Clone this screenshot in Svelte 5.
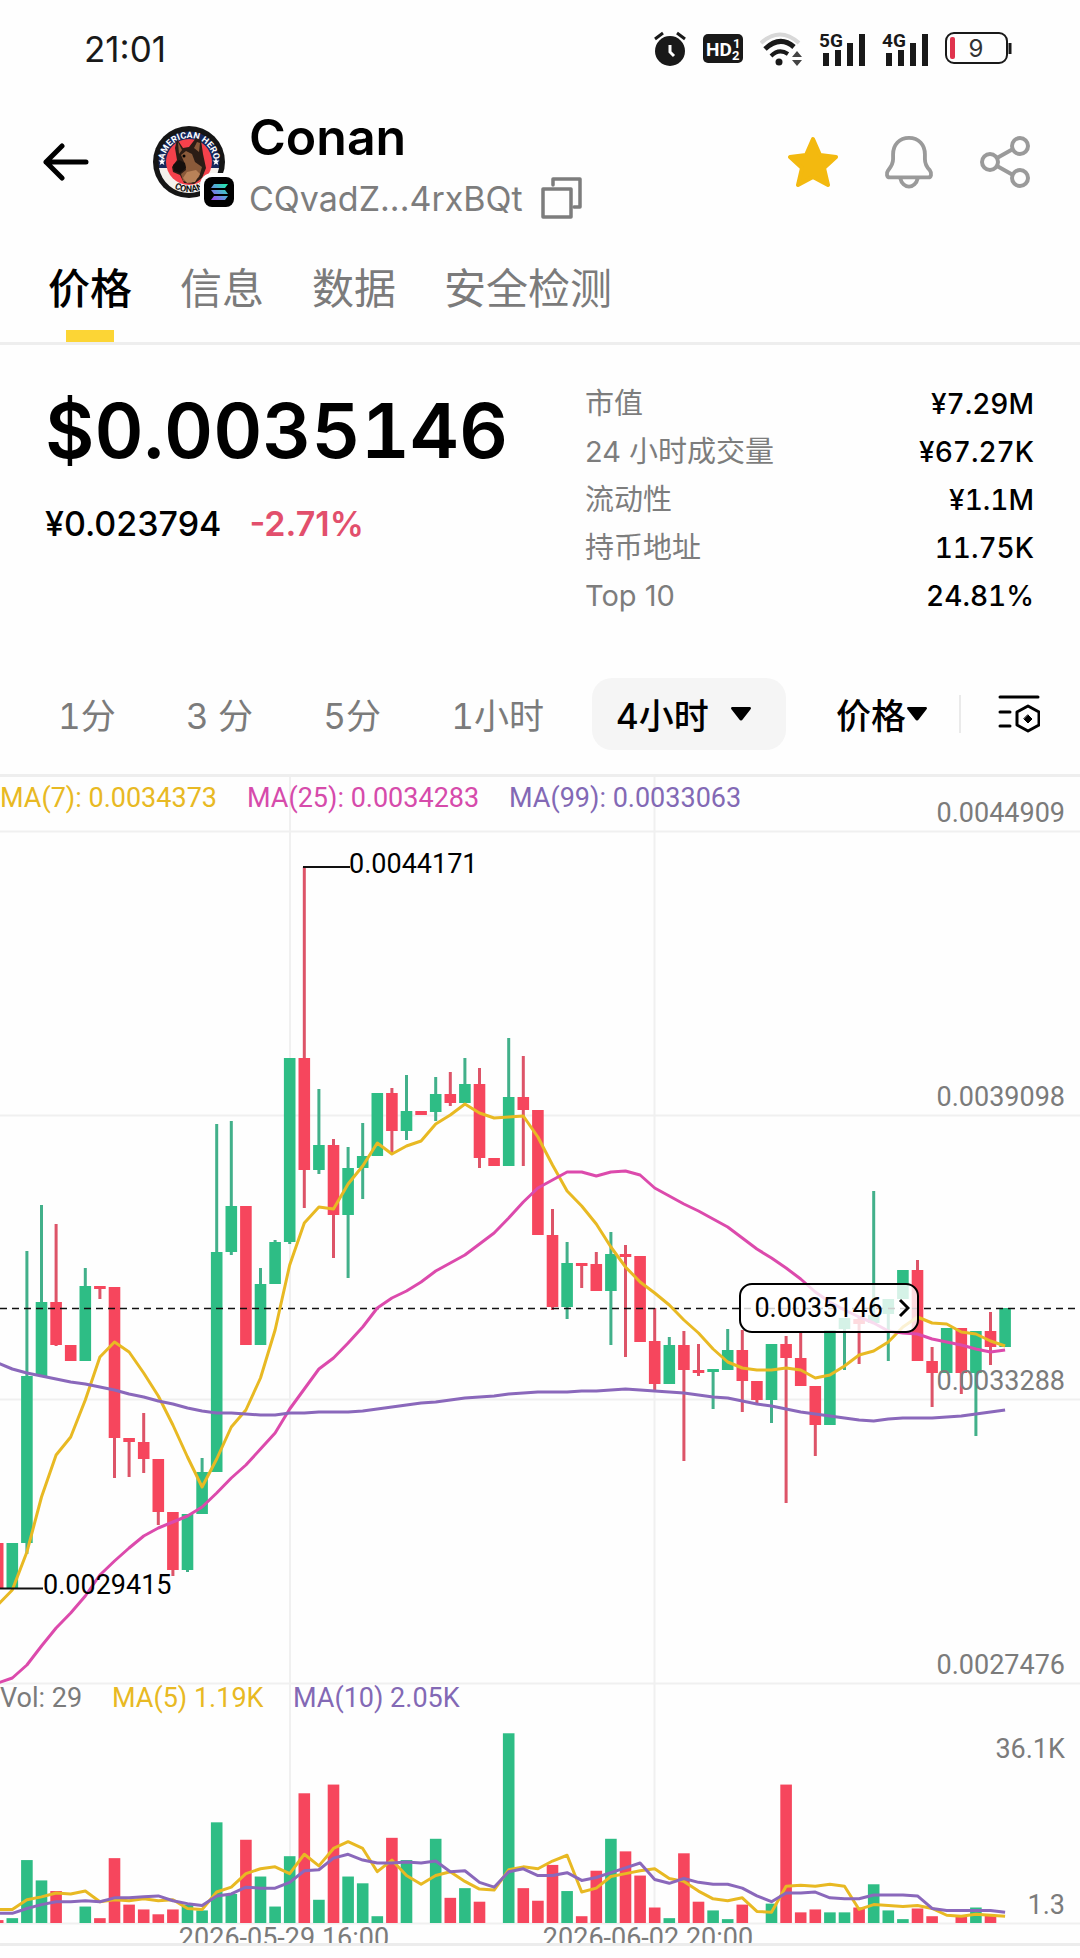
<script lang="ts">
  const tabs = ['价格', '信息', '数据', '安全检测'];
  const intervals = ['1分', '3 分', '5分', '1小时'];
  const stats = [
    ['市值', '¥7.29M'],
    ['24 小时成交量', '¥67.27K'],
    ['流动性', '¥1.1M'],
    ['持币地址', '11.75K'],
    ['Top 10', '24.81%'],
  ];

  let activeTab = $state('价格');

  // Candles: direction, body top, body bottom, wick top, wick bottom, volume height
  type Candle = ['u' | 'd', number, number, number, number, number];
  const candles: Candle[] = [
    ['d', 1543, 1588, 1543, 1588, 3],
    ['u', 1543, 1588, 1543, 1588, 5],
    ['u', 1376, 1543, 1251, 1554, 65],
    ['u', 1302, 1376, 1205, 1376, 44],
    ['d', 1302, 1345, 1224, 1346, 33],
    ['d', 1345, 1361, 1345, 1361, 0],
    ['u', 1286, 1361, 1268, 1361, 17],
    ['d', 1286, 1289, 1286, 1299, 5],
    ['d', 1287, 1438, 1287, 1478, 67],
    ['d', 1438, 1442, 1438, 1477, 19],
    ['d', 1442, 1459, 1413, 1473, 14],
    ['d', 1459, 1512, 1459, 1525, 9],
    ['d', 1512, 1570, 1512, 1576, 14],
    ['u', 1514, 1570, 1514, 1572, 19],
    ['u', 1472, 1514, 1458, 1514, 13],
    ['u', 1252, 1472, 1124, 1472, 104],
    ['u', 1206, 1252, 1121, 1255, 30],
    ['d', 1206, 1345, 1206, 1345, 86],
    ['u', 1284, 1345, 1268, 1345, 48],
    ['u', 1242, 1284, 1240, 1284, 17],
    ['u', 1058, 1242, 1058, 1244, 69],
    ['d', 1058, 1170, 867, 1208, 134],
    ['u', 1145, 1170, 1089, 1174, 24],
    ['d', 1145, 1215, 1139, 1258, 143],
    ['u', 1168, 1215, 1147, 1278, 48],
    ['u', 1156, 1168, 1123, 1199, 41],
    ['u', 1093, 1156, 1093, 1156, 7],
    ['d', 1093, 1131, 1088, 1154, 88],
    ['u', 1111, 1131, 1075, 1140, 65],
    ['d', 1111, 1115, 1111, 1115, 0],
    ['u', 1094, 1112, 1077, 1121, 87],
    ['d', 1094, 1103, 1072, 1106, 26],
    ['u', 1084, 1103, 1058, 1103, 36],
    ['d', 1084, 1158, 1068, 1168, 22],
    ['d', 1158, 1166, 1158, 1166, 0],
    ['u', 1097, 1166, 1038, 1166, 196],
    ['d', 1097, 1110, 1056, 1166, 36],
    ['d', 1110, 1235, 1110, 1235, 23],
    ['d', 1235, 1307, 1209, 1310, 60],
    ['u', 1263, 1307, 1242, 1319, 33],
    ['d', 1263, 1266, 1263, 1288, 7],
    ['d', 1264, 1291, 1252, 1291, 54],
    ['u', 1254, 1291, 1232, 1345, 87],
    ['d', 1254, 1257, 1245, 1357, 74],
    ['d', 1256, 1342, 1256, 1342, 49],
    ['d', 1341, 1384, 1308, 1390, 16],
    ['u', 1345, 1384, 1337, 1384, 5],
    ['d', 1345, 1370, 1331, 1461, 72],
    ['d', 1370, 1373, 1344, 1376, 22],
    ['u', 1369, 1372, 1369, 1409, 13],
    ['u', 1350, 1370, 1329, 1370, 4],
    ['d', 1350, 1381, 1330, 1412, 19],
    ['d', 1381, 1400, 1381, 1403, 0],
    ['u', 1344, 1400, 1344, 1423, 20],
    ['d', 1344, 1358, 1336, 1503, 143],
    ['d', 1358, 1386, 1332, 1386, 11],
    ['d', 1386, 1425, 1386, 1456, 14],
    ['u', 1330, 1425, 1330, 1425, 11],
    ['u', 1318, 1329, 1318, 1370, 11],
    ['d', 1319, 1324, 1317, 1364, 16],
    ['u', 1315, 1323, 1191, 1323, 40],
    ['u', 1299, 1314, 1299, 1361, 13],
    ['u', 1270, 1299, 1270, 1299, 4],
    ['d', 1270, 1361, 1260, 1361, 15],
    ['d', 1361, 1373, 1347, 1407, 7],
    ['u', 1328, 1373, 1328, 1373, 0],
    ['d', 1328, 1373, 1328, 1394, 8],
    ['u', 1331, 1373, 1331, 1436, 16],
    ['d', 1331, 1347, 1312, 1365, 8],
    ['u', 1308, 1347, 1308, 1347, 0],
  ];

  const step = 14.6;
  const volumeBase = 1923;
  const volumeScale = 0.968;
  const cx = (i: number) => 12.3 + step * (i - 1);

  // Moving averages: one level for each candle
  const ma7 = [1605, 1590, 1552, 1497, 1455, 1437, 1400, 1357, 1342, 1352, 1373, 1396, 1425, 1457, 1487, 1459, 1427, 1410, 1378, 1330, 1265, 1223, 1207, 1209, 1184, 1166, 1143, 1154, 1146, 1141, 1124, 1115, 1104, 1113, 1118, 1117, 1116, 1137, 1165, 1191, 1206, 1224, 1247, 1267, 1282, 1293, 1305, 1320, 1333, 1349, 1362, 1368, 1370, 1370, 1368, 1370, 1378, 1375, 1366, 1355, 1351, 1342, 1327, 1317, 1323, 1324, 1332, 1334, 1341, 1346];
  const ma25 = [1683, 1678, 1665, 1646, 1628, 1613, 1596, 1575, 1561, 1548, 1536, 1528, 1522, 1516, 1507, 1493, 1478, 1465, 1449, 1433, 1409, 1389, 1369, 1358, 1343, 1327, 1308, 1298, 1291, 1282, 1271, 1263, 1255, 1244, 1233, 1218, 1202, 1188, 1180, 1172, 1172, 1176, 1172, 1171, 1175, 1188, 1196, 1204, 1211, 1219, 1227, 1238, 1249, 1258, 1268, 1279, 1292, 1302, 1310, 1317, 1323, 1331, 1333, 1334, 1339, 1342, 1345, 1349, 1352, 1350];
  const ma99 = [1363, 1369, 1373, 1376, 1379, 1382, 1384, 1387, 1390, 1394, 1397, 1401, 1404, 1408, 1411, 1413, 1413, 1414, 1415, 1415, 1413, 1413, 1412, 1412, 1412, 1411, 1409, 1407, 1405, 1403, 1402, 1400, 1398, 1397, 1396, 1394, 1393, 1392, 1392, 1392, 1391, 1391, 1390, 1389, 1390, 1391, 1392, 1393, 1395, 1397, 1398, 1401, 1404, 1406, 1409, 1412, 1414, 1416, 1418, 1420, 1421, 1419, 1418, 1418, 1418, 1417, 1416, 1414, 1412, 1410];
  const vol5 = [14, 14, 24, 27, 31, 30, 33, 22, 24, 23, 25, 23, 24, 15, 14, 32, 37, 51, 56, 58, 51, 71, 59, 77, 84, 77, 53, 65, 49, 40, 49, 53, 43, 35, 34, 55, 58, 56, 64, 70, 32, 36, 48, 51, 54, 56, 46, 43, 33, 25, 23, 26, 12, 11, 38, 39, 38, 40, 38, 14, 19, 18, 17, 18, 15, 8, 7, 9, 8, 7];
  const vol10 = [10, 10, 15, 19, 22, 22, 23, 22, 26, 26, 27, 28, 23, 20, 18, 28, 30, 37, 36, 36, 42, 54, 55, 67, 71, 65, 62, 62, 63, 62, 64, 53, 54, 42, 37, 53, 56, 49, 49, 52, 44, 47, 52, 57, 62, 45, 41, 46, 42, 40, 40, 36, 28, 22, 31, 31, 32, 26, 25, 25, 29, 29, 29, 28, 15, 13, 13, 13, 13, 11];

  const line = (levels: number[]) => levels.map((y, i) => `${cx(i).toFixed(1)},${y}`).join(' ');
  const volLine = (levels: number[]) => line(levels.map((h) => volumeBase - h * volumeScale));
</script>

<main>
  <div class="status">
    <time>21:01</time>
    <div class="status-icons">
      <svg width="32" height="36" viewBox="0 0 32 36" fill="none" stroke="#191919">
        <circle cx="16" cy="20" r="15" fill="#191919" stroke="none" />
        <path d="M1 8 9 2M31 8 23 2" stroke-width="3" />
        <path d="M16 14v7l4 4" stroke="#fff" stroke-width="3" />
      </svg>
      <svg width="40" height="30" viewBox="0 0 40 30" class="badge-text">
        <rect width="40" height="29" rx="5" fill="#191919" />
        <text class="hd" x="3" y="22">HD</text>
        <text x="30" y="14">1</text>
        <text x="29" y="26">2</text>
      </svg>
      <svg width="42" height="34" viewBox="0 0 42 34" fill="none">
        <path d="M1 11Q20-6 39 11" stroke="#d8d8d8" stroke-width="4" />
        <path d="M5 17Q20 3 34 15" stroke="#191919" stroke-width="5" />
        <path d="M11 24Q19 16 28 22" stroke="#191919" stroke-width="4" />
        <circle cx="19" cy="30" r="3.5" fill="#191919" />
        <path d="m32 25 5-6 5 6zM32 28l5 6 5-6z" fill="#444" />
      </svg>
      {#each ['5G', '4G'] as net}
        <svg width="46" height="44" viewBox="0 -5 46 44">
          <text class="net" x="0" y="15">{net}</text>
          <path d="M4 21h6v13H4zM16 18h6v16h-6zM28 11h6v23h-6zM40 2h6v32h-6z" fill="#191919" />
        </svg>
      {/each}
      <svg width="67" height="33" viewBox="0 0 67 33" fill="none">
        <rect x="1" y="1" width="61" height="30" rx="8" stroke="#191919" stroke-width="2" />
        <rect x="5" y="5" width="5" height="22" rx="2" fill="#e0334d" />
        <path d="M65 11v11" stroke="#191919" stroke-width="3" />
        <text class="charge" x="31" y="25" text-anchor="middle">9</text>
      </svg>
    </div>
  </div>

  <header>
    <button class="icon" aria-label="返回">
      <svg width="46" height="38" viewBox="0 0 46 38" fill="none" stroke="#000" stroke-width="5" stroke-linecap="round" stroke-linejoin="round">
        <path d="M43 19H3M19 3 3 19l16 16" />
      </svg>
    </button>
    <svg class="logo" width="84" height="86" viewBox="0 0 84 86">
      <defs>
        <path id="arc-top" d="M11 38a25 25 0 0 1 50 0" />
        <path id="arc-bottom" d="M6 37a30 30 0 0 0 60 0" />
        <linearGradient id="sol" x1="1" y1="0" x2="0" y2="1">
          <stop offset="0" stop-color="#19f5a5" />
          <stop offset=".5" stop-color="#5aa0d8" />
          <stop offset="1" stop-color="#a53cf5" />
        </linearGradient>
      </defs>
      <circle cx="36" cy="37" r="36" fill="#151515" />
      <circle cx="36" cy="37" r="30.500" fill="#16285c" />
      <path d="M6 43a30.500 30.500 0 0 0 60 0z" fill="#f4f1ec" />
      <circle cx="36" cy="37" r="23" fill="#f5414b" />
      <text class="ring" fill="#fff"><textPath href="#arc-top" startOffset="50%" text-anchor="middle">AMERICAN HERO</textPath></text>
      <path d="m9 33 1 2.500h2.500l-2 1.800.8 2.700L9 38.400 6.700 40l.8-2.700-2-1.800H8zM63 33l1 2.500h2.500l-2 1.800.8 2.700-2.300-1.600-2.300 1.600.8-2.700-2-1.800H62z" fill="#fff" />
      <text class="ring" fill="#111"><textPath href="#arc-bottom" startOffset="50%" text-anchor="middle">CONAN</textPath></text>
      <path d="M24 14l6 9 6-1 7-9 5 2 2 14 3 14-4 10-8 6-10-1-4-8-7-3-1-5 5-7-2-12z" fill="#2b1c15" />
      <path d="M25 17l4 8-3 4zM44 17l3 1-1 9-5-4zM28 30l5-4 6 3 3 8 7 5-3 10-8 6-8-2-2-7 5-4-1-6z" fill="#8a5a3a" />
      <path d="M20 40l6-5 6 3 1 5-6 5-6-2z" fill="#150f0d" />
      <path d="M34 47l9-2 4 4-5 8-8 1-4-5z" fill="#b98258" />
      <circle cx="31" cy="31" r="1.500" fill="#000" />
      <rect x="47" y="48" width="38" height="39" rx="12" fill="#fefefe" />
      <rect x="51" y="52" width="30" height="30" rx="8" fill="#000" />
      <path d="M61 59h14l-3 4H58zM58 65h14l3 4H61zM61 71h14l-3 4H58z" fill="url(#sol)" />
    </svg>
    <div class="token">
      <h1>Conan</h1>
      <div class="address">
        <span>CQvadZ...4rxBQt</span>
        <button class="icon" aria-label="复制地址">
          <svg width="42" height="42" viewBox="0 0 42 42" fill="none" stroke="#7d7d7d" stroke-width="3.500" stroke-linejoin="round" stroke-linecap="round">
            <rect x="2" y="12" width="28" height="28" />
            <path d="M12 8V2h27v28h-6" />
          </svg>
        </button>
      </div>
    </div>
    <div class="actions">
      <button class="icon" aria-label="收藏">
        <svg width="50" height="52" viewBox="0 0 50 52">
          <path d="M25 3l7 16 16 2-12 11 4 17-15-8-15 8 4-17L2 21l16-2z" fill="#f3b90f" stroke="#f3b90f" stroke-width="4" stroke-linejoin="round" />
        </svg>
      </button>
      <button class="icon" aria-label="提醒">
        <svg width="50" height="54" viewBox="0 0 50 56" fill="none" stroke="#9a9a9a" stroke-width="4" stroke-linejoin="round">
          <path d="M25 3C15 3 8.500 10 8.500 20v5c0 5-2 8-5 11.500C1 40 2 44 5 44h40c3 0 4-4 1.500-7.500C43 33 41.500 30 41.500 25v-5C41.500 10 35 3 25 3z" />
          <path d="M16 45c1 5 5 8.500 9 8.500s8-3.500 9-8.500" />
        </svg>
      </button>
      <button class="icon" aria-label="分享">
        <svg width="50" height="52" viewBox="0 0 50 52" fill="none" stroke="#9a9a9a" stroke-width="4">
          <circle cx="10" cy="26" r="8" /><circle cx="40" cy="10" r="8" /><circle cx="40" cy="42" r="8" />
          <path d="m17 22 16-9M17 30l16 9" />
        </svg>
      </button>
    </div>
  </header>

  <nav>
    {#each tabs as tab}
      <button class:active={tab === activeTab} onclick={() => (activeTab = tab)}>{tab}</button>
    {/each}
  </nav>

  <section class="summary">
    <div>
      <p class="price">$0.0035146</p>
      <p class="local"><span>¥0.023794</span><strong>-2.71%</strong></p>
    </div>
    <dl>
      {#each stats as [name, value]}
        <div><dt>{name}</dt><dd>{value}</dd></div>
      {/each}
    </dl>
  </section>

  <div class="toolbar">
    <div class="intervals">
      {#each intervals as interval}
        <button>{interval}</button>
      {/each}
    </div>
    <label class="pill">
      <select aria-label="周期"><option>4小时</option><option>1日</option></select>
      <svg width="20" height="14" viewBox="0 0 20 14"><path d="M1 0h18q2 1 0 3l-7 9q-2 3-4 0L1 3Q-1 1 1 0z" /></svg>
    </label>
    <label class="kind">
      <select aria-label="图表类型"><option>价格</option><option>市值</option></select>
      <svg width="20" height="14" viewBox="0 0 20 14"><path d="M1 0h18q2 1 0 3l-7 9q-2 3-4 0L1 3Q-1 1 1 0z" /></svg>
    </label>
    <button class="icon settings" aria-label="指标设置">
      <svg width="42" height="38" viewBox="0 0 42 38" fill="none" stroke="#000" stroke-width="3" stroke-linecap="round" stroke-linejoin="round">
        <path d="M2 2h38M2 17h10M2 31h10M30 11l11 6v13l-11 6-11-6V17z" />
        <path d="m30 20 4 4-4 4-4-4z" fill="#000" stroke-width="1" />
      </svg>
    </button>
  </div>

  <section class="chart">
    <svg viewBox="0 777 1080 1181" role="img" aria-label="Conan K线">
      <defs><clipPath id="axis"><rect x="0" y="1923" width="1080" height="20" /></clipPath></defs>
      <g class="grid">
        <path d="M0 831.500H1080M0 1115.500H1080M0 1399.500H1080M0 1683.500H1080M290 777V1923M654.500 777V1923" />
        <path d="M0 1923.500H1080" />
        <path class="rule" d="M0 1944.500H1080" />
      </g>
      {#each candles as [dir, top, bottom, high, low, volume], i}
        <g class={dir}>
          <rect class="wick" x={cx(i) - 1.5} y={high} width="3" height={low - high} />
          <rect x={cx(i) - 5.8} y={top} width="11.6" height={bottom - top} />
          <rect x={cx(i) - 5.8} y={volumeBase - volume * volumeScale} width="11.6" height={volume * volumeScale} />
        </g>
      {/each}
      <path d="M0 1308.500H1080" stroke="#111" stroke-width="1.500" stroke-dasharray="7 5" />
      <g class="lines">
        <polyline class="yellow" points={line(ma7)} />
        <polyline class="pink" points={line(ma25)} />
        <polyline class="purple" points={line(ma99)} />
        <polyline class="yellow" points={volLine(vol5)} />
        <polyline class="purple" points={volLine(vol10)} />
      </g>
      <path d="M303 867H350M0 1588.500H43" stroke="#111" stroke-width="2" />
      <g class="legend">
        <text class="yellow" x="0" y="807">MA(7): 0.0034373</text>
        <text class="pink" x="247" y="807">MA(25): 0.0034283</text>
        <text class="purple" x="509" y="807">MA(99): 0.0033063</text>
        <text x="0" y="1707">Vol: 29</text>
        <text class="yellow" x="112" y="1707">MA(5) 1.19K</text>
        <text class="purple" x="293" y="1707">MA(10) 2.05K</text>
      </g>
      <text class="mark" x="349" y="873">0.0044171</text>
      <text class="mark" x="43" y="1594">0.0029415</text>
      <g text-anchor="end">
        <text x="1065" y="822">0.0044909</text>
        <text x="1065" y="1106">0.0039098</text>
        <text x="1065" y="1390">0.0033288</text>
        <text x="1065" y="1674">0.0027476</text>
        <text x="1065" y="1758">36.1K</text>
        <text x="1065" y="1914">1.3</text>
      </g>
      <g text-anchor="middle" clip-path="url(#axis)">
        <text x="284" y="1947">2026-05-29 16:00</text>
        <text x="648" y="1947">2026-06-02 20:00</text>
      </g>
    </svg>
    <button class="current">
      0.0035146
      <svg width="12" height="20" viewBox="0 0 12 20" fill="none" stroke="#000" stroke-width="3"><path d="m2 2 8 8-8 8" /></svg>
    </button>
  </section>
</main>

<style>
  :global(body) {
    margin: 0;
    background: #fefefe;
  }
  main {
    font-family: Inter, 'Noto Sans CJK SC', sans-serif;
    color: #000;
    overflow: hidden;
  }
  button,
  select {
    font: inherit;
    color: inherit;
    background: none;
    border: 0;
    padding: 0;
    margin: 0;
    appearance: none;
    white-space: nowrap;
  }
  svg {
    display: block;
    flex: none;
  }
  h1,
  p,
  dl,
  dd {
    margin: 0;
  }

  .status {
    display: flex;
    justify-content: space-between;
    align-items: center;
    height: 97px;
    padding: 0 68px 0 84px;
  }
  time {
    font-size: 35px;
    color: #191919;
  }
  .status-icons {
    display: flex;
    align-items: center;
    gap: 17px;
  }
  .badge-text text {
    fill: #fff;
    font: 700 13px Roboto, sans-serif;
  }
  .badge-text .hd {
    font-size: 19px;
  }
  .net {
    font: 700 19px Roboto, sans-serif;
    fill: #191919;
  }
  .charge {
    font: 24px Inter, sans-serif;
    fill: #333;
  }

  header {
    display: flex;
    align-items: center;
    height: 130px;
    padding: 0 50px 0 43px;
  }
  .logo {
    margin: 12px 12px 0 64px;
  }
  .token {
    flex: 1;
    padding-top: 6px;
  }
  h1 {
    font-size: 50px;
    font-weight: 600;
    line-height: 66px;
  }
  .address {
    display: flex;
    align-items: center;
    gap: 18px;
    height: 56px;
    font-size: 34px;
    color: #7d7d7d;
  }
  .actions {
    display: flex;
    align-items: center;
    gap: 46px;
  }

  nav {
    display: flex;
    gap: 48px;
    height: 115px;
    padding: 0 48px;
    border-bottom: 3px solid #eee;
  }
  nav button {
    position: relative;
    padding-top: 2px;
    font-size: 42px;
    color: #7b7b7b;
  }
  nav .active {
    color: #000;
    font-weight: 500;
  }
  nav .active::after {
    content: '';
    position: absolute;
    bottom: 0;
    left: 50%;
    width: 48px;
    height: 12px;
    margin-left: -24px;
    background: #fcd535;
  }

  .summary {
    display: flex;
    justify-content: space-between;
    height: 323px;
    padding: 35px 46px 0 45px;
    box-sizing: border-box;
  }
  .price {
    margin-top: 4px;
    font-size: 76px;
    font-weight: 600;
    line-height: 92px;
    font-variant-numeric: tabular-nums;
  }
  .local {
    display: flex;
    gap: 28px;
    margin-top: 24px;
    font-size: 34px;
    font-weight: 500;
    line-height: 48px;
  }
  strong {
    color: #e24f6c;
    font-weight: 600;
  }
  dl {
    width: 449px;
  }
  dl div {
    display: flex;
    justify-content: space-between;
    font-size: 29px;
    line-height: 48px;
  }
  dt {
    color: #7d7d7d;
  }
  dd {
    font-size: 28px;
    font-weight: 500;
    font-variant-numeric: tabular-nums;
  }

  .toolbar {
    display: flex;
    align-items: center;
    height: 92px;
    padding: 0 40px 14px 58px;
    border-bottom: 3px solid #eee;
    font-size: 35px;
    font-weight: 500;
    line-height: 50px;
    font-variant-numeric: tabular-nums;
  }
  .toolbar select,
  .intervals button {
    height: 54px;
    padding-top: 4px;
    box-sizing: border-box;
  }
  .intervals {
    display: flex;
    flex: 1;
    justify-content: space-between;
    padding-right: 48px;
    color: #7b7b7b;
    font-weight: 400;
  }
  .pill,
  .kind {
    display: flex;
    align-items: center;
  }
  .pill {
    gap: 22px;
    height: 72px;
    padding: 0 35px 0 24px;
    border-radius: 20px;
    background: #f5f5f5;
  }
  .kind {
    margin-left: 50px;
  }
  .settings {
    margin-left: 32px;
    padding-left: 37px;
    border-left: 2px solid #eaeaea;
  }

  .chart {
    position: relative;
    font: 27px Roboto, sans-serif;
  }
  .chart > svg {
    width: 100%;
    height: auto;
    fill: #7b7b7b;
  }
  .grid {
    fill: none;
    stroke: #f0f0f0;
    stroke-width: 2;
  }
  .rule {
    stroke: #ececec;
    stroke-width: 3;
  }
  .u {
    fill: #2ebd85;
  }
  .d {
    fill: #f6465d;
  }
  .u .wick {
    fill: #42b08a;
  }
  .d .wick {
    fill: #dd5468;
  }
  .lines {
    fill: none;
    stroke-width: 3;
    stroke-linejoin: round;
  }
  .lines .yellow {
    stroke: #e8b923;
  }
  .lines .pink {
    stroke: #dc4aac;
  }
  .lines .purple {
    stroke: #8a68bb;
  }
  .legend .yellow {
    fill: #e8b923;
  }
  .legend .pink {
    fill: #d64bab;
  }
  .legend .purple {
    fill: #8369b5;
  }
  .mark {
    fill: #000;
  }
  .ring {
    font: 700 9px Roboto, sans-serif;
  }
  .current {
    position: absolute;
    top: 506px;
    left: calc(68% + 5px);
    display: flex;
    align-items: center;
    gap: 15px;
    height: 50px;
    padding: 0 7px 0 13px;
    border: 2px solid #000;
    border-radius: 13px;
    background: rgba(255, 255, 255, 0.8);
  }
</style>
